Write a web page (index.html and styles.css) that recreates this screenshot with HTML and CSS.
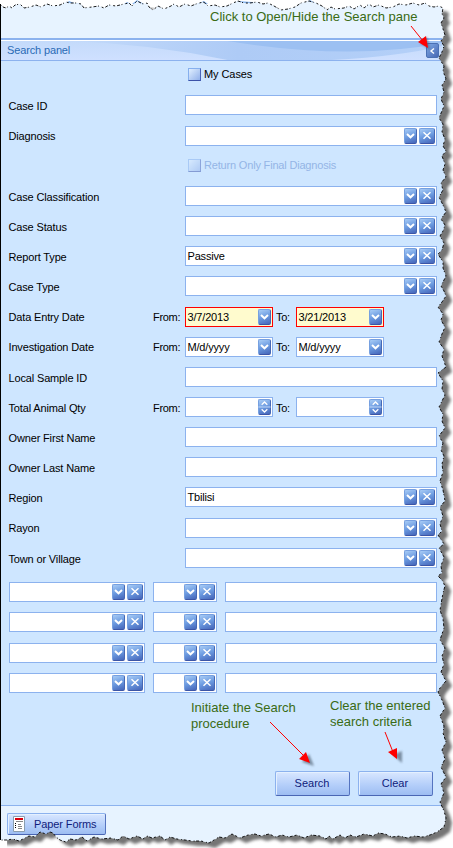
FILE: index.html
```html
<!DOCTYPE html>
<html lang="en">
<head>
<meta charset="utf-8">
<title>Search panel</title>
<link rel="stylesheet" href="styles.css">
</head>
<body>
<svg class="defs" aria-hidden="true">
  <symbol id="down" viewBox="0 0 13 16"><path d="M3 6l3.5 3.3L10 6" fill="none" stroke="#fff" stroke-width="2"/></symbol>
  <symbol id="cross" viewBox="0 0 16 16"><path d="M4.5 4.2l7 6.6M11.500 4.200l-7 6.600" fill="none" stroke="#fff" stroke-width="1.5"/></symbol>
  <symbol id="spin" viewBox="0 0 13 17"><path d="M0 8.500h13" stroke="#c6dcfa" stroke-width="1"/><path d="M3.500 6l3-2.800 3 2.800M3.500 11l3 2.800 3-2.800" fill="none" stroke="#fff" stroke-width="1.400"/></symbol>
</svg>
<div class="window">
  <div class="toolbar"></div>
  <header class="head">
    <svg class="swoosh" viewBox="0 0 440 19" preserveAspectRatio="none" aria-hidden="true">
      <defs><linearGradient id="sw" x1="0" x2="1" y1="0" y2="0"><stop offset="0" stop-color="#c3dafa"/><stop offset=".45" stop-color="#aecbf6"/><stop offset="1" stop-color="#b4d0f8"/></linearGradient></defs>
      <path d="M70 0Q150 3 226 19H330Q400 15 440 5V0Z" fill="url(#sw)"/>
      <path d="M226 0Q350 20 440 2V0Z" fill="#9cc0f2"/>
    </svg>
    <span class="title">Search panel</span>
    <button class="collapse"><svg width="13" height="14" viewBox="0 0 13 14"><path d="M8 4.500L5 7l3 2.500" fill="none" stroke="#fff" stroke-width="1.400"/></svg></button>
  </header>
  <main class="form">
    <div class="check first"><i class="box"></i><span>My Cases</span></div>
    <div class="row loose"><label>Case ID</label><div class="field"></div></div>
    <div class="row up"><label>Diagnosis</label><div class="field"><b class="btn"><svg><use href="#down"/></svg></b><b class="btn x"><svg><use href="#cross"/></svg></b></div></div>
    <div class="check off"><i class="box"></i><span>Return Only Final Diagnosis</span></div>
    <div class="row"><label>Case Classification</label><div class="field"><b class="btn"><svg><use href="#down"/></svg></b><b class="btn x"><svg><use href="#cross"/></svg></b></div></div>
    <div class="row"><label>Case Status</label><div class="field"><b class="btn"><svg><use href="#down"/></svg></b><b class="btn x"><svg><use href="#cross"/></svg></b></div></div>
    <div class="row"><label>Report Type</label><div class="field"><span>Passive</span><b class="btn"><svg><use href="#down"/></svg></b><b class="btn x"><svg><use href="#cross"/></svg></b></div></div>
    <div class="row loose"><label>Case Type</label><div class="field"><b class="btn"><svg><use href="#down"/></svg></b><b class="btn x"><svg><use href="#cross"/></svg></b></div></div>
    <div class="row up"><label>Data Entry Date</label><em>From:</em><div class="field short must"><span>3/7/2013</span><b class="btn"><svg><use href="#down"/></svg></b></div><em class="to">To:</em><div class="field short must"><span>3/21/2013</span><b class="btn"><svg><use href="#down"/></svg></b></div></div>
    <div class="row up"><label>Investigation Date</label><em>From:</em><div class="field short"><span>M/d/yyyy</span><b class="btn"><svg><use href="#down"/></svg></b></div><em class="to">To:</em><div class="field short"><span>M/d/yyyy</span><b class="btn"><svg><use href="#down"/></svg></b></div></div>
    <div class="row"><label>Local Sample ID</label><div class="field"></div></div>
    <div class="row"><label>Total Animal Qty</label><em>From:</em><div class="field short"><b class="btn"><svg><use href="#spin"/></svg></b></div><em class="to">To:</em><div class="field short"><b class="btn"><svg><use href="#spin"/></svg></b></div></div>
    <div class="row"><label>Owner First Name</label><div class="field"></div></div>
    <div class="row"><label>Owner Last Name</label><div class="field"></div></div>
    <div class="row loose"><label>Region</label><div class="field"><span>Tbilisi</span><b class="btn"><svg><use href="#down"/></svg></b><b class="btn x"><svg><use href="#cross"/></svg></b></div></div>
    <div class="row up"><label>Rayon</label><div class="field"><b class="btn"><svg><use href="#down"/></svg></b><b class="btn x"><svg><use href="#cross"/></svg></b></div></div>
    <div class="row last"><label>Town or Village</label><div class="field"><b class="btn"><svg><use href="#down"/></svg></b><b class="btn x"><svg><use href="#cross"/></svg></b></div></div>
    <div class="criteria"><div class="field"><b class="btn"><svg><use href="#down"/></svg></b><b class="btn x"><svg><use href="#cross"/></svg></b></div><div class="field"><b class="btn"><svg><use href="#down"/></svg></b><b class="btn x"><svg><use href="#cross"/></svg></b></div><div class="field"></div></div>
    <div class="criteria loose"><div class="field"><b class="btn"><svg><use href="#down"/></svg></b><b class="btn x"><svg><use href="#cross"/></svg></b></div><div class="field"><b class="btn"><svg><use href="#down"/></svg></b><b class="btn x"><svg><use href="#cross"/></svg></b></div><div class="field"></div></div>
    <div class="criteria"><div class="field"><b class="btn"><svg><use href="#down"/></svg></b><b class="btn x"><svg><use href="#cross"/></svg></b></div><div class="field"><b class="btn"><svg><use href="#down"/></svg></b><b class="btn x"><svg><use href="#cross"/></svg></b></div><div class="field"></div></div>
    <div class="criteria"><div class="field"><b class="btn"><svg><use href="#down"/></svg></b><b class="btn x"><svg><use href="#cross"/></svg></b></div><div class="field"><b class="btn"><svg><use href="#down"/></svg></b><b class="btn x"><svg><use href="#cross"/></svg></b></div><div class="field"></div></div>
    <div class="actions"><button class="push">Search</button><button class="push">Clear</button></div>
  </main>
  <footer class="foot">
    <button class="push paper"><svg width="12" height="16" viewBox="0 0 12 16"><path d="M.5.500h11v15H.500z" fill="#fff" stroke="#8a9eb0"/><path d="M2 2h8v2H2z" fill="#d8000c"/><path d="M3 5.500h7M5 8.500h3M5 10.500h4M5 12.500h4" stroke="#888"/><path d="M2 7h1v1H2zM2 9h1v1H2zM2 11h1v1H2z" fill="#000"/></svg><span>Paper Forms</span></button>
  </footer>
</div>
<svg class="torn" width="453" height="848" viewBox="0 0 453 848" aria-hidden="true">
  <defs>
    <path id="edge" d="M0 4L3 7L6 8L9 6L12 8L15 5L20 4L24 8L30 7L36 5L41 7L47 4L53 6L60 5L66 2L70 3L76 3L81 4L84 8L92 7L99 6L104 8L109 5L116 6L124 4L129 3L132 6L137 1L143 4L147 3L149 7L153 10L158 6L164 9L171 6L174 4L179 7L185 4L191 6L196 4L203 2L205 3L208 6L215 5L220 7L227 6L233 3L238 1L244 3L250 3L257 2L263 4L268 3L274 6L281 10L288 9L295 7L301 3L309 1L316 3L322 6L327 10L331 7L335 9L344 8L349 6L354 9L360 5L364 8L369 4L373 7L379 5L386 8L393 7L399 4L406 5L413 3L419 5L425 3L429 6L434 7L439 6L443 8L442 14L444 18L441 23L443 29L445 35L441 41L444 46L442 52L439 58L444 66L443 71L446 79L442 85L444 92L441 99L444 106L439 118L443 124L442 132L445 139L443 146L446 151L442 156L445 164L443 170L446 177L441 183L443 190L439 197L443 205L446 212L441 219L445 225L443 231L440 236L444 243L442 250L438 254L443 262L443 268L446 276L441 286L444 291L446 296L442 302L438 307L443 314L441 320L445 327L442 334L439 342L444 349L442 356L446 367L438 373L443 381L442 389L445 395L439 407L443 414L442 421L445 428L439 436L443 443L441 450L444 456L442 464L443 472L440 481L443 490L445 501L440 507L443 516L440 524L442 531L438 535L444 544L439 548L444 557L441 566L442 573L438 576L442 580L445 586L443 593L440 610L443 619L444 628L440 640L445 648L442 656L444 664L441 672L446 681L440 688L438 692L442 700L445 708L440 716L444 726L443 733L446 742L442 750L445 759L441 767L446 777L441 784L444 793L440 802L444 811L446 818L444 827L437 832L430 835L423 837L414 836L407 838L400 836L392 837L385 834L378 833L373 836L364 834L356 837L350 835L345 838L340 835L333 839L329 836L326 839L320 836L311 835L304 838L297 835L289 837L282 835L276 837L269 834L261 836L255 834L248 835L240 838L232 834L225 838L219 837L214 840L209 843L201 841L192 841L185 840L177 839L170 837L165 840L160 836L152 838L147 836L143 839L137 836L129 839L123 836L118 840L111 838L102 839L94 837L87 841L82 837L76 840L70 839L66 842L60 840L56 837L53 833L50 832L46 834L40 832L35 837L29 836L25 838L19 841L13 839L7 840L0 840Z"/>
    <filter id="soft" x="-5%" y="-5%" width="110%" height="110%"><feGaussianBlur stdDeviation="1.500"/></filter>
    <filter id="soft2" x="-80%" y="-80%" width="260%" height="260%"><feGaussianBlur stdDeviation="1.300"/></filter>
    <mask id="outside"><rect width="453" height="848" fill="#fff"/><use href="#edge" fill="#000"/></mask>
  </defs>
  <g mask="url(#outside)">
    <rect width="453" height="848" fill="#fff"/>
    <use href="#edge" transform="translate(6 5)" fill="#747474" filter="url(#soft)"/>
    <path d="M0 0H453V7H0zM0 836H7V848H0z" fill="#fff"/>
    <path d="M65 4l4-3 5 2 7 1zM124 4l3-2 4 2zM132 4l5-4 7 4zM197 4l7-3 4 3zM234 4l4-3 14 1 4 2zM304 4l6-4 7 4z" fill="#8cb8f0"/>
  </g>
  <use href="#edge" fill="none" stroke="#000" stroke-width=".9" stroke-dasharray="2 2 3 1.500 1 3"/>
  <path d="M.5 4V840" stroke="#000"/>
  <g filter="url(#soft2)" fill="#456" opacity=".6"><path d="M430 50l-10-7 7-6zM314 766l-12-4 7-8zM402 763l-9-8 9-4z"/></g>
  <g stroke="red" stroke-width="1" fill="red"><path d="M411 26l12 15M270 722l33 33M385 732l8 20"/><path stroke="none" d="M428 48l-10-6 8-6zM310 763l-11-4 7-7zM397 759l-9-7 9-4z"/></g>
</svg>
<p class="note open">Click to Open/Hide the Search pane</p>
<p class="note init">Initiate the Search<br>procedure</p>
<p class="note clear">Clear the entered<br>search criteria</p>
</body>
</html>
```
FILE: styles.css
```css
* { box-sizing: border-box; }
body {
  margin: 0;
  width: 453px;
  height: 848px;
  overflow: hidden;
  position: relative;
  background: #fff;
  color: #000;
  font: 11px/14px "Liberation Sans", Arial, sans-serif;
}
.defs { position: absolute; width: 0; height: 0; }
.window { width: 453px; height: 848px; display: flex; flex-direction: column; background: #cee6ff; padding-left: 1px; }
.toolbar { height: 38px; background: #e7f3ff; flex: none; }
.head {
  height: 23px;
  flex: none;
  position: relative;
  display: flex;
  align-items: center;
  justify-content: space-between;
  width: 441px;
  padding: 1px 3px 0 6px;
  border-top: 2px solid #8cb2ee;
  border-bottom: 1px solid #8cb2ee;
  box-shadow: inset 0 1px #fff;
  background: linear-gradient(#c3dafa, #cfe0ff);
}
.swoosh { position: absolute; left: 0; top: 1px; width: 441px; height: 19px; }
.title { position: relative; color: #2a6bb5; letter-spacing: -.14px; padding-bottom: 2px; }
.collapse {
  position: relative;
  width: 13px;
  height: 15px;
  padding: 0;
  border: 1px solid #4a70b4;
  border-radius: 2px;
  background: linear-gradient(135deg, #7ea8e4, #4868b4);
}
.collapse svg { display: block; margin: -1px; }
.form { flex: none; width: 441px; height: 744px; padding: 7px 5px 0 8px; }
.check { display: flex; gap: 3px; padding-left: 179px; height: 27px; }
.check span { line-height: 13px; letter-spacing: -.08px; }
.check.off span { letter-spacing: -.18px; }
.check .box { width: 13px; height: 13px; border: 1px solid #6d8fd8; border-color: #86b0ee #4a64b8 #3c52a8 #86b0ee; background: linear-gradient(135deg, #e0efff, #91b0ea); }
.check.off { padding-top: 3px; height: 30px; color: #94b5e6; }
.check.off .box { opacity: .5; }
.row { display: flex; height: 30px; }
.row.loose { height: 31px; }
.row.last { height: 34px; }
.row label { width: 176px; line-height: 22px; white-space: nowrap; letter-spacing: -.15px; text-indent: -.5px; }
.row em { font-style: normal; line-height: 22px; width: 32px; letter-spacing: -.3px; }
.row label:has(+ em) { width: 144px; }
.row em.to { width: 23px; padding-left: 3px; }
.row.up label, .row.up em { line-height: 20px; }
.field {
  flex: 1;
  height: 20px;
  display: flex;
  justify-content: flex-end;
  gap: 2px;
  padding: 1px;
  border: 1px solid #8cb2ee;
  background: #fff;
}
.field.short { flex: none; width: 88px; }
.field.must { border-color: #f00; background: #fffbce; }
.field span { flex: 1; line-height: 17px; padding-left: .5px; white-space: nowrap; letter-spacing: -.18px; }
.btn {
  width: 13px;
  height: 16px;
  border-radius: 2px;
  border: 1px solid;
  border-color: #76a0e0 #4668b4 #3c55a6 #76a0e0;
  background: linear-gradient(160deg, #a8ccf6, #6b9ae0 50%, #4565b8);
}
.btn.x { width: 16px; }
.btn svg { display: block; width: 13px; height: 16px; margin: -1px; }
.btn.x svg { width: 16px; }
.criteria { display: grid; grid-template-columns: 136px 64px 212px; column-gap: 8px; height: 30px; }
.criteria.loose { height: 31px; }
.actions { display: flex; justify-content: flex-end; gap: 8px; padding: 68px 4px 0 0; }
.push {
  width: 75px;
  height: 25px;
  padding: 0 1px 1px 0;
  font: inherit;
  font-size: 11px;
  letter-spacing: 0;
  color: #101c7b;
  border: 1px solid;
  border-color: #8cb2ee #5574c0 #4a66b4 #8cb2ee;
  border-radius: 2px;
  box-shadow: inset 1px 1px #e4f0ff;
  background: linear-gradient(#d9e7ff, #b5cffa 55%, #9dbdf2);
}
.foot { flex: 1; border-top: 1px solid #8cb2ee; background: #e7f3ff; padding: 7px 0 0 6px; }
.paper { display: flex; align-items: center; gap: 9px; width: 99px; height: 22px; padding-left: 5px; letter-spacing: -.1px; }
.torn { position: absolute; left: 0; top: 0; }
.note { position: absolute; margin: 0; color: #3a6b14; font-size: 13px; line-height: 16px; white-space: nowrap; }
.open { left: 210px; top: 9px; }
.init { left: 191px; top: 700px; }
.clear { left: 330px; top: 698px; }
```
